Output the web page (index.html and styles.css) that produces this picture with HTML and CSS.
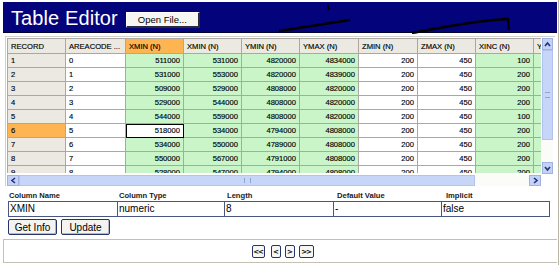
FILE: index.html
```html
<!DOCTYPE html>
<html>
<head>
<meta charset="utf-8">
<link rel="stylesheet" href="styles.css">
</head>
<body>
<div class="page">
  <div class="header">
    <span class="title">Table Editor</span>
    <button class="open-btn">Open File...</button>
    <svg class="swoosh" width="560" height="32" viewBox="0 0 560 32">
      <path d="M279 29 L350 18" stroke="#000" stroke-width="2.5" fill="none"/>
      <path d="M328 3 L329 8" stroke="#000" stroke-width="2" fill="none"/>
      <path d="M412 31 C440 26 470 19 508 17 L509 28" stroke="#000" stroke-width="2.5" fill="none"/>
    </svg>
  </div>
  <div class="grid-wrap">
    <div class="grid-main">
      <div class="viewport">
        <table class="grid">
          <colgroup>
            <col style="width:58px"><col style="width:60px"><col style="width:58px"><col style="width:58px"><col style="width:58px"><col style="width:59px"><col style="width:59px"><col style="width:58px"><col style="width:58px"><col style="width:58px">
          </colgroup>
          <thead>
            <tr><th>RECORD</th><th>AREACODE ...</th><th class="sel">XMIN (N)</th><th>XMIN (N)</th><th>YMIN (N)</th><th>YMAX (N)</th><th>ZMIN (N)</th><th>ZMAX (N)</th><th>XINC (N)</th><th>YINC (N)</th></tr>
          </thead>
          <tbody>
            <tr><td class="rec">1</td><td class="w">0</td><td class="g n">511000</td><td class="g n">531000</td><td class="g n">4820000</td><td class="g n">4834000</td><td class="w n">200</td><td class="w n">450</td><td class="g n">100</td><td class="g n">100</td></tr>
            <tr><td class="rec">2</td><td class="w">1</td><td class="g n">531000</td><td class="g n">553000</td><td class="g n">4820000</td><td class="g n">4839000</td><td class="w n">200</td><td class="w n">450</td><td class="g n">200</td><td class="g n">200</td></tr>
            <tr><td class="rec">3</td><td class="w">2</td><td class="g n">509000</td><td class="g n">529000</td><td class="g n">4808000</td><td class="g n">4820000</td><td class="w n">200</td><td class="w n">450</td><td class="g n">200</td><td class="g n">200</td></tr>
            <tr><td class="rec">4</td><td class="w">3</td><td class="g n">529000</td><td class="g n">544000</td><td class="g n">4808000</td><td class="g n">4820000</td><td class="w n">200</td><td class="w n">450</td><td class="g n">200</td><td class="g n">200</td></tr>
            <tr><td class="rec">5</td><td class="w">4</td><td class="g n">544000</td><td class="g n">559000</td><td class="g n">4808000</td><td class="g n">4820000</td><td class="w n">200</td><td class="w n">450</td><td class="g n">100</td><td class="g n">100</td></tr>
            <tr><td class="rec selrec">6</td><td class="w">5</td><td class="w n cur">518000</td><td class="g n">534000</td><td class="g n">4794000</td><td class="g n">4808000</td><td class="w n">200</td><td class="w n">450</td><td class="g n">200</td><td class="g n">200</td></tr>
            <tr><td class="rec">7</td><td class="w">6</td><td class="g n">534000</td><td class="g n">550000</td><td class="g n">4789000</td><td class="g n">4808000</td><td class="w n">200</td><td class="w n">450</td><td class="g n">200</td><td class="g n">200</td></tr>
            <tr><td class="rec">8</td><td class="w">7</td><td class="g n">550000</td><td class="g n">567000</td><td class="g n">4791000</td><td class="g n">4808000</td><td class="w n">200</td><td class="w n">450</td><td class="g n">200</td><td class="g n">200</td></tr>
            <tr><td class="rec">9</td><td class="w">8</td><td class="g n">528000</td><td class="g n">547000</td><td class="g n">4794000</td><td class="g n">4808000</td><td class="w n">200</td><td class="w n">450</td><td class="g n">200</td><td class="g n">200</td></tr>
          </tbody>
        </table>
      </div>
      <div class="hscroll">
        <div class="sb-btn">
          <svg width="7" height="7" viewBox="0 0 7 7"><path d="M5 1 L2 3.5 L5 6" stroke="#22327a" stroke-width="1.6" fill="none"/></svg>
        </div>
        <div class="hthumb"><span class="grip-h"></span></div>
        <div class="htrack"></div>
        <div class="sb-btn">
          <svg width="7" height="7" viewBox="0 0 7 7"><path d="M2 1 L5 3.5 L2 6" stroke="#22327a" stroke-width="1.6" fill="none"/></svg>
        </div>
      </div>
    </div>
    <div class="vscroll">
      <div class="sb-btn v">
        <svg width="7" height="7" viewBox="0 0 7 7"><path d="M1 5 L3.5 2 L6 5" stroke="#22327a" stroke-width="1.6" fill="none"/></svg>
      </div>
      <div class="vthumb"><span class="grip-v"></span></div>
      <div class="vtrack"></div>
      <div class="sb-btn v">
        <svg width="7" height="7" viewBox="0 0 7 7"><path d="M1 2 L3.5 5 L6 2" stroke="#22327a" stroke-width="1.6" fill="none"/></svg>
      </div>
    </div>
  </div>
  <div class="props">
    <div class="labels">
      <span class="c1">Column Name</span><span class="c2">Column Type</span><span class="c3">Length</span><span class="c4">Default Value</span><span class="c5">Implicit</span>
    </div>
    <div class="fields">
      <div class="fld c1">XMIN</div><div class="fld c2">numeric</div><div class="fld c3">8</div><div class="fld c4">-</div><div class="fld c5">false</div>
    </div>
    <div class="actions">
      <button class="btn get">Get Info</button>
      <button class="btn upd">Update</button>
    </div>
  </div>
  <div class="pager">
    <button class="pbtn wide">&lt;&lt;</button>
    <button class="pbtn">&lt;</button>
    <button class="pbtn">&gt;</button>
    <button class="pbtn wide2">&gt;&gt;</button>
  </div>
</div>
</body>
</html>
```

FILE: styles.css
```css
* { box-sizing: border-box; }
html, body { margin: 0; padding: 0; background: #ffffff; }
body { width: 560px; height: 266px; overflow: hidden; font-family: "Liberation Sans", Arial, sans-serif; }

.page {
  width: 558px;
  height: 265px;
  margin: 0 0 0 1px;
  border-right: 1px solid #b8b4a8;
  padding: 2px 1px 0 2px;
  display: flex;
  flex-direction: column;
}

.header {
  position: relative;
  height: 31px;
  background: #03037c;
  border-bottom: 1px solid #000030;
  display: flex;
  align-items: center;
  padding-left: 8px;
}
.title {
  color: #ffffff;
  font-size: 20px;
  letter-spacing: 0.1px;
  line-height: 20px;
  margin-top: 2px;
}
.open-btn {
  margin-left: 8px;
  margin-top: 5px;
  width: 74px;
  height: 16px;
  padding: 0;
  background: #f6f6f3;
  border: 1px solid #ffffff;
  border-right: 2px solid #2a2a3a;
  border-bottom: 2px solid #2a2a3a;
  font-family: "Liberation Sans", Arial, sans-serif;
  font-size: 9.5px;
  color: #000;
}
.swoosh { position: absolute; left: -3px; top: 0; pointer-events: none; }

.grid-wrap {
  margin-top: 3px;
  margin-left: 2px;
  width: 550px;
  height: 150px;
  border-top: 1px solid #d0d0d0;
  border-left: 1px solid #d0d0d0;
  display: flex;
  padding: 1px 0 0 1px;
}
.grid-main { width: 534px; display: flex; flex-direction: column; }
.viewport { width: 534px; height: 135px; overflow: hidden; }

.grid {
  border-collapse: collapse;
  table-layout: fixed;
  width: 584px;
  font-size: 7.6px;
  color: #000;
  -webkit-text-stroke: 0.15px #000;
}
.grid th, .grid td {
  border: 1px solid #aaa8a0;
  padding: 0 3px;
  white-space: nowrap;
  overflow: hidden;
  font-weight: normal;
  text-align: left;
}
.grid th { height: 15px; background: #ebe9e2; }
.grid th.sel { background: #ffb452; }
.grid td { height: 14px; }
.grid td.rec { background: #ebe9e2; }
.grid td.selrec { background: #ffb452; }
.grid td.w { background: #ffffff; }
.grid td.g { background: #c9f5c9; }
.grid td.n { text-align: right; }
.grid td.cur { outline: 1px solid #000; outline-offset: -1px; }

.hscroll { height: 11px; display: flex; margin-top: 2px; }
.sb-btn {
  width: 12px;
  height: 11px;
  background: #c3d2f6;
  border: 1px solid #9fb2e0;
  display: flex;
  align-items: center;
  justify-content: center;
}
.hthumb {
  width: 456px;
  background: #c6d5f8;
  border: 1px solid #b1c3ee;
  display: flex;
  align-items: center;
  justify-content: center;
}
.grip-h { width: 7px; height: 5px; border-left: 1px solid #8ea3d6; border-right: 1px solid #8ea3d6; }
.htrack { flex: 1; background: #fbfbf8; }

.vscroll {
  width: 11px;
  height: 136px;
  display: flex;
  flex-direction: column;
  margin-left: 1px;
}
.sb-btn.v { width: 11px; height: 12px; }
.vthumb {
  height: 90px;
  background: #c6d5f8;
  border: 1px solid #b1c3ee;
  display: flex;
  align-items: center;
  justify-content: center;
}
.grip-v { width: 5px; height: 6px; border-top: 1px solid #8ea3d6; border-bottom: 1px solid #8ea3d6; }
.vtrack { flex: 1; background: #fbfbf8; }

.props { padding: 5px 0 0 5px; }
.labels, .fields { display: flex; }
.labels span {
  font-size: 7.6px;
  font-weight: bold;
  color: #1a1a1a;
  height: 10px;
  line-height: 10px;
  padding-left: 1px;
}
.c1 { width: 110px; }
.c2 { width: 108px; }
.c3 { width: 110px; }
.c4 { width: 109px; }
.c5 { width: 109px; }
.fld {
  height: 16px;
  border: 1px solid #4a5682;
  margin-right: -1px;
  font-size: 10px;
  line-height: 14px;
  padding-left: 1px;
  color: #000;
  background: #fff;
}
.actions { display: flex; gap: 4px; margin-top: 2px; }
.btn {
  height: 16px;
  padding: 0;
  border: 1px solid #273469;
  border-radius: 2px;
  background: #f3f3ef;
  font-family: "Liberation Sans", Arial, sans-serif;
  font-size: 10px;
  color: #000;
  box-shadow: inset -1px -1px 0 #b4b8c8;
}
.btn.get { width: 49px; }
.btn.upd { width: 49px; }

.pager {
  margin-top: 4px;
  height: 24px;
  border-top: 1px solid #c4c0b4;
  border-left: 1px solid #c4c0b4;
  border-bottom: 1px solid #c4c0b4;
  display: flex;
  justify-content: center;
  align-items: center;
  gap: 4px;
  padding-left: 4px;
  padding-top: 1px;
}
.pbtn {
  height: 13px;
  width: 10px;
  padding: 0;
  border: 1px solid #273469;
  border-radius: 2px;
  background: #f6f6f2;
  font-family: "DejaVu Sans", sans-serif;
  font-weight: bold;
  font-size: 7px;
  line-height: 10px;
  color: #000;
  letter-spacing: -1px;
}
.pbtn.wide { width: 13px; margin-right: 2px; }
.pbtn.wide2 { width: 15px; }
```
